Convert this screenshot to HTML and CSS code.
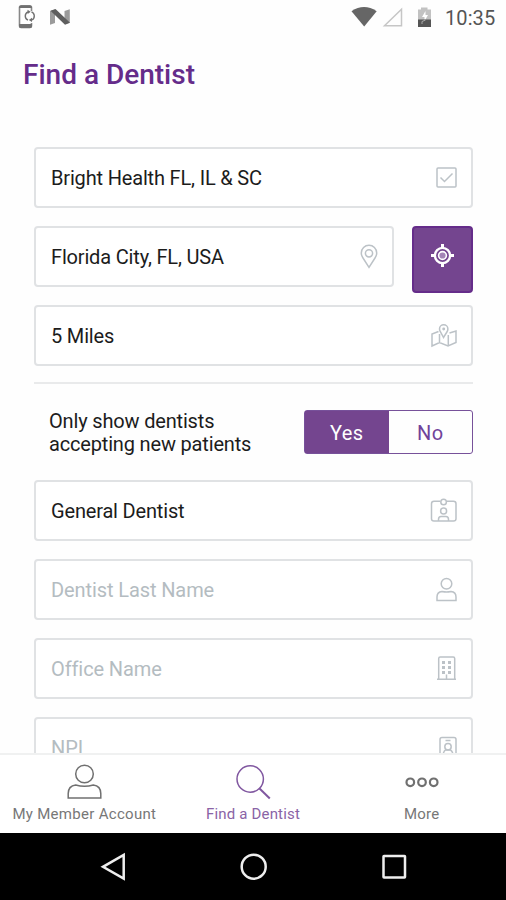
FILE: index.html
```html
<!DOCTYPE html>
<html lang="en">
<head>
<meta charset="utf-8">
<title>Find a Dentist</title>
<link rel="stylesheet" href="styles.css">
</head>
<body>
<div class="status">
  <svg class="status-phone" width="20" height="26" viewBox="16 4 20 26" fill="none">
    <path d="M31.500 11V7.500q0-1.800-1.800-1.800h-8.400q-1.800 0-1.800 1.800v18q0 1.800 1.800 1.800h8.400q1.800 0 1.800-1.800V23" stroke="#888" stroke-width="1.600"/>
    <path d="M19 24h13v2.200q0 2-2 2h-9q-2 0-2-2zM19 8q0-2.500 2.500-2.500h8Q32 5.500 32 8z" fill="#707070"/>
    <path d="M28 20.200a4.600 4.600 0 0 1 0-8.400M31.500 11.800a4.600 4.600 0 0 1 .5 8.200" stroke="#707070" stroke-width="1.400"/>
    <path d="M27.500 9.800l3.200 2-3 2.300zM32 17.800v4.200l-3.200-2z" fill="#707070"/>
  </svg>
  <svg class="status-n" width="22" height="18" viewBox="49 8 22 18">
    <path d="M50 11l5-1.500V23l-5 1.800zM64.500 11l5.300-1.800v13.500L64.500 24z" fill="#9b9b9b"/>
    <path d="M50.500 10.700l5-1.700 14.500 13.700-5 2z" fill="#5e5e5e"/>
  </svg>
  <span class="spacer"></span>
  <svg class="status-net" width="84" height="24" viewBox="350 4 84 24">
    <path d="M351.500 11.200Q364 3 376.700 11.200L364.200 26.500z" fill="#666"/>
    <path d="M384.500 25.800h17V9.300z" fill="none" stroke="#c6c6c6" stroke-width="1.500"/>
    <path d="M418 9.500h3V7.500h6.500v2H431v10.500H418z" fill="#c2c2c2"/>
    <path d="M425.500 11l-3.500 6h2.500v4l3.500-6h-2.500z" fill="#fff"/>
    <path d="M418 19.500h13V27h-13z" fill="#555"/>
    <path d="M422 24v-2.500l3.500-1.500" fill="none" stroke="#aaa"/>
  </svg>
  <span class="clock">10:35</span>
</div>
<h1>Find a Dentist</h1>
<main>
  <div class="group">
    <div class="field"><span>Bright Health FL, IL &amp; SC</span>
      <svg class="icon" viewBox="430 164 28 27"><rect x="437" y="168" width="19" height="19" rx="1"/><path d="M440.500 177.500l4 4 8-8"/></svg>
    </div>
    <div class="row">
      <div class="field"><span>Florida City, FL, USA</span>
        <svg class="icon" viewBox="351 243 28 27"><path d="M369 267.300l-6-9.300q-1.700-2.500-1.700-5a7.700 7.700 0 0 1 15.400 0q0 2.500-1.700 5z"/><circle cx="369" cy="253.300" r="3.600"/></svg>
      </div>
      <button class="locate" aria-label="Use my location">
        <svg width="26" height="26" viewBox="-12.500 -12.500 26 26" fill="none" stroke="#fff"><circle r="7.600" stroke-width="2.400"/><circle r="3.900" fill="#fff" fill-opacity=".35" stroke-width="1.600"/><path d="M0-11.500v4M0 11.500v-4M-11.500 0h4M11.500 0h-4" stroke-width="3"/></svg>
      </button>
    </div>
    <div class="field"><span>5 Miles</span>
      <svg class="icon" viewBox="430 322 28 27"><path d="M438.500 331.500l-6.500 2.500v12l7.500-3.500 8.500 3.500 8-3.500v-11.500l-6.500 2M439.500 334v8.500M448.300 335v11M443.500 337.500l-3-5.500q-1-1.500-1-3a4.200 4.200 0 0 1 8.400 0q0 1.500-1 3z"/><circle cx="443.700" cy="329" r=".7"/></svg>
    </div>
  </div>
  <hr>
  <div class="accepting">
    <p>Only show dentists<br>accepting new patients</p>
    <div class="toggle"><span class="on">Yes</span><span class="off">No</span></div>
  </div>
  <div class="group">
    <div class="field"><span>General Dentist</span>
      <svg class="icon" viewBox="430 498 28 27"><path d="M440 502.300h-6q-2.500 0-2.500 2.500v15q0 2.300 2.500 2.300h19.500q2.500 0 2.500-2.300v-15q0-2.500-2.500-2.500h-6.500M438.500 522v-1.500q0-3 2.500-3h5q2.500 0 2.500 3v1.500"/><circle cx="443.600" cy="503" r="2.800"/><circle cx="443.600" cy="512" r="3"/></svg>
    </div>
    <div class="field empty"><span>Dentist Last Name</span>
      <svg class="icon" viewBox="430 576 28 27"><circle cx="446.500" cy="583.800" r="5.300"/><path d="M437 600.500v-3.500q0-5 5-5.500 4.500 1 9 0 5 .5 5 5.500v3.500z"/></svg>
    </div>
    <div class="field empty"><span>Office Name</span>
      <svg class="icon" viewBox="430 655 28 27"><path d="M437 679.300h19M438.700 679v-20.500q0-1.500 1.500-1.500h13q1.500 0 1.500 1.500V679M446.500 679v-4.500"/><path class="dots" d="M443.500 661v13M449.500 661v13"/></svg>
    </div>
    <div class="field empty"><span>NPI</span>
      <svg class="icon" viewBox="430 733 28 27"><rect x="440" y="736.500" width="16" height="22" rx="2"/><path d="M445.500 739.500h5M443 753.500q1-4 2.500-4.500h5q2 1 2.500 4.500"/><circle cx="448" cy="745.800" r="3.200"/></svg>
    </div>
  </div>
</main>
<nav class="tabs">
  <div class="tab account">
    <svg width="40" height="38" viewBox="64.500 763 40 38"><circle cx="85" cy="774" r="8.800"/><path d="M68.700 798v-4.500q0-7.500 7.500-8.500 8.800 2.500 17.600 0 7.500 1 7.500 8.500v4.500z"/></svg>
    <span>My Member Account</span>
  </div>
  <div class="tab active">
    <svg width="40" height="38" viewBox="233.500 763 40 38"><circle cx="250.700" cy="779" r="13.200"/><path d="M260 788.500l10.300 10" stroke-width="2"/></svg>
    <span>Find a Dentist</span>
  </div>
  <div class="tab">
    <svg class="more" width="40" height="38" viewBox="402.500 763 40 38"><circle cx="410.800" cy="782.300" r="3.800"/><circle cx="422.500" cy="782.300" r="3.800"/><circle cx="434.200" cy="782.300" r="3.800"/></svg>
    <span>More</span>
  </div>
</nav>
<div class="system">
  <svg width="32" height="32" viewBox="97 851 32 32"><path d="M123.700 855v23.500L103 866.800z"/></svg>
  <svg width="32" height="32" viewBox="238 851 32 32"><circle cx="253.700" cy="866.700" r="12"/></svg>
  <svg width="32" height="32" viewBox="379 851 32 32"><rect x="383.500" y="856" width="21.500" height="21.500" rx=".5"/></svg>
</div>
</body>
</html>
```
FILE: styles.css
```css
* { box-sizing: border-box; }
body {
  margin: 0;
  width: 506px;
  height: 900px;
  display: flex;
  flex-direction: column;
  overflow: hidden;
  background: #fefefe;
  color: #1c1c1c;
  font-family: Roboto, sans-serif;
  font-size: 20px;
  letter-spacing: -0.17px;
}
svg { display: block; flex: none; }
.status {
  flex: none;
  height: 36px;
  display: flex;
  align-items: flex-start;
  padding: 4px 10px 0 16px;
}
.status-n { margin: 4px 0 0 13px; }
.spacer { flex: 1; }
.clock {
  width: 51px;
  margin-left: 11px;
  line-height: 28px;
  color: #555;
  white-space: nowrap;
  letter-spacing: 0.1px;
}
h1 {
  flex: none;
  margin: 0;
  height: 111px;
  padding: 21px 23px 0;
  font-size: 28px;
  line-height: 36px;
  font-weight: 500;
  letter-spacing: 0;
  color: #652c8a;
}
main {
  flex: 1;
  min-height: 0;
  overflow: hidden;
  padding: 0 33px 0 34px;
}
.group { display: flex; flex-direction: column; gap: 17.6px; }
.field {
  flex: none;
  height: 61.3px;
  display: flex;
  align-items: center;
  justify-content: space-between;
  padding: 0 13px 0 15px;
  border: 2px solid #e0e2e4;
  border-radius: 4px;
  background: #fff;
  white-space: nowrap;
}
.field span { padding-top: 1px; }
.empty { color: #b4bcc1; letter-spacing: -0.1px; }
.icon {
  width: 28px;
  height: 27px;
  fill: none;
  stroke: #bcc2c7;
  stroke-width: 1.500;
}
.dots { stroke-width: 3; stroke-dasharray: 3 2; }
.row { display: flex; gap: 18px; height: 61.3px; }
.row .field { flex: 1; }
.locate {
  width: 61px;
  height: 67px;
  display: flex;
  align-items: center;
  justify-content: center;
  padding: 0 0 6px;
  border: 2px solid #652c8a;
  border-radius: 4px;
  background: #74458f;
}
hr { height: 2px; margin: 16px 0 26px; border: 0; background: #e9eaeb; }
.accepting {
  display: flex;
  justify-content: space-between;
  height: 43px;
  margin-bottom: 27px;
  padding-left: 15px;
}
p { margin: 0; line-height: 23px; white-space: nowrap; }
.toggle {
  display: flex;
  width: 169px;
  height: 44px;
  border: 1px solid #77519a;
  border-radius: 3px;
  line-height: 44px;
  text-align: center;
  letter-spacing: 0.4px;
}
.toggle span { width: 50%; }
.on { background: #74458f; color: #fff; }
.off { color: #70429a; }
.tabs {
  flex: none;
  height: 80px;
  display: flex;
  justify-content: space-between;
  border-top: 2px solid #f0f1f1;
  background: #fff;
}
.tab {
  width: 169px;
  display: flex;
  flex-direction: column;
  align-items: center;
  padding-top: 8px;
  color: #777;
  font-size: 15px;
  line-height: 26px;
  letter-spacing: 0.18px;
  white-space: nowrap;
}
.account { letter-spacing: 0.3px; }
.tab svg { fill: none; stroke: #707070; stroke-width: 1.500; }
.tab .more { stroke-width: 2.200; }
.active { color: #8a63a6; }
.active svg { stroke: #8057a0; }
.system {
  flex: none;
  height: 67px;
  display: flex;
  justify-content: space-between;
  padding: 18px 95px 0 97px;
  background: #000;
}
.system svg { fill: none; stroke: #eee; stroke-width: 2.500; }
```
